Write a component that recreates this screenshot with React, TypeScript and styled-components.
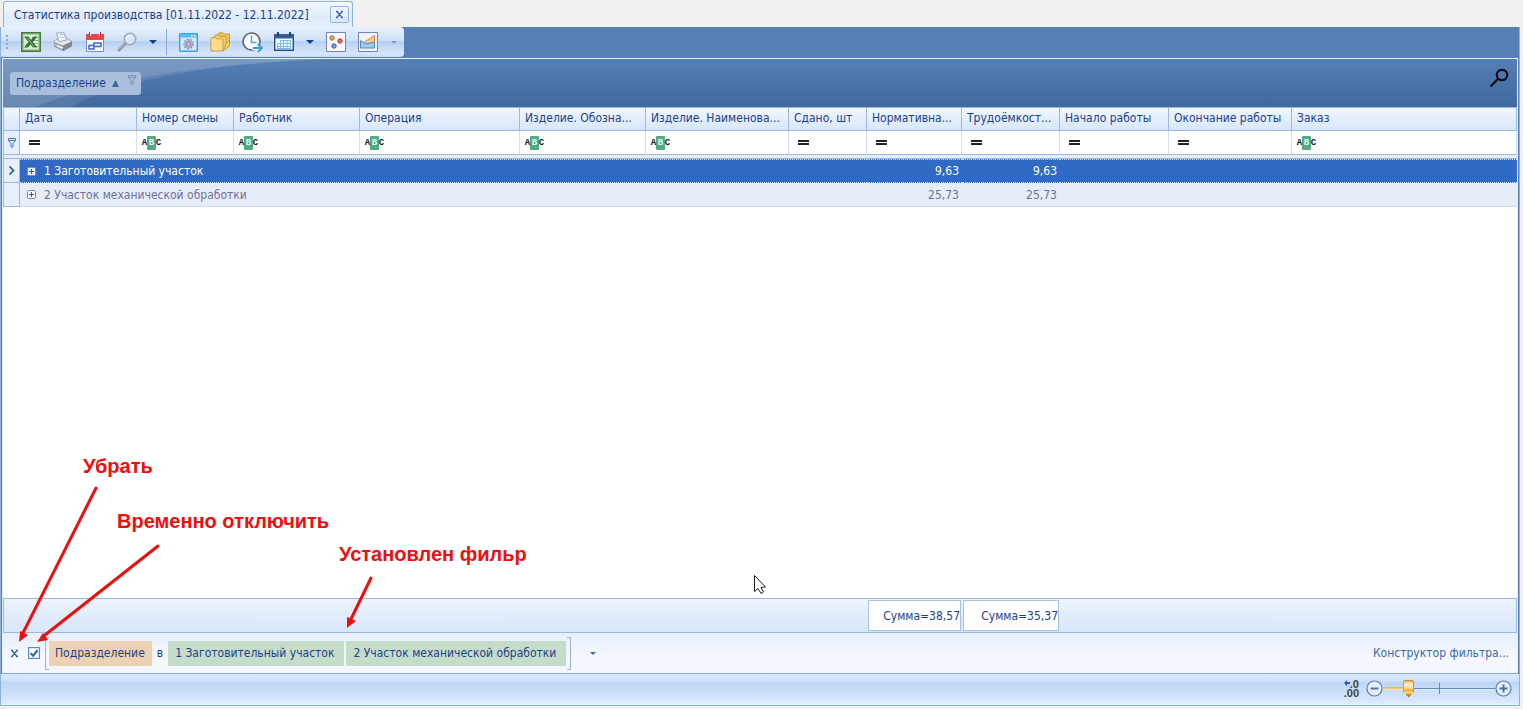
import React from "react";
import styled, { createGlobalStyle, css } from "styled-components";

const ink = "#1e3f87";
const line = "#9db8db";
const columnsTemplate =
  "16px 117px 97px 126px 160px 126px 143px 78px 95px 98px 109px 123px minmax(0, 1fr)";

const Global = createGlobalStyle`
  * { box-sizing: border-box; }
  body {
    margin: 0;
    background: #f0f0f0;
    color: ${ink};
    font: 12px/16px "DejaVu Sans Condensed", "DejaVu Sans", sans-serif;
  }
  button, input { font: inherit; color: inherit; margin: 0; padding: 0; }
  button { border: 0; background: none; cursor: default; }
`;

const Page = styled.div`
  position: relative;
  display: flex;
  flex-direction: column;
  min-height: 100vh;
  padding: 1px 3px 3px 0;
`;

const TabStrip = styled.header`
  display: flex;
  height: 26px;
  padding-left: 3px;
`;

const Tab = styled.div`
  display: flex;
  align-items: center;
  gap: 21px;
  padding: 0 3px 0 10px;
  border: 1px solid #8fb2e0;
  border-bottom: 0;
  border-radius: 3px 3px 0 0;
  background: linear-gradient(#f4f8fe, #dfebfb 60%, #e6f0fd);
  white-space: nowrap;
`;

const TabClose = styled.button`
  display: flex;
  align-items: center;
  justify-content: center;
  width: 19px;
  height: 17px;
  border: 1px solid #94b3dc;
  border-radius: 2px;
  background: linear-gradient(#f2f7fe, #d9e7fa);
`;

const Frame = styled.main`
  flex: 1;
  display: flex;
  flex-direction: column;
  border: 1px solid #8db1de;
  border-top: 0;
  background: #557fb5;
`;

const ToolbarRow = styled.div`
  display: flex;
  height: 31px;
  padding-bottom: 1px;
`;

const Toolbar = styled.div`
  display: flex;
  align-items: center;
  padding-left: 14px;
  border-radius: 0 4px 4px 0;
  background:
    linear-gradient(#8aa9d4, #8aa9d4) 5px 8px / 2px 2px no-repeat,
    linear-gradient(#8aa9d4, #8aa9d4) 5px 12px / 2px 2px no-repeat,
    linear-gradient(#8aa9d4, #8aa9d4) 5px 16px / 2px 2px no-repeat,
    linear-gradient(#8aa9d4, #8aa9d4) 5px 20px / 2px 2px no-repeat,
    linear-gradient(#e9f1fc 0, #cfdff5 45%, #b4cff2 46%, #d9e7fa 90%, #c5daf6);
`;

const ToolButton = styled.button<{ $width?: number }>`
  display: flex;
  align-items: center;
  justify-content: center;
  width: ${(p) => p.$width ?? 32}px;
  height: 28px;
`;

const ToolSeparator = styled.span`
  width: 1px;
  height: 26px;
  margin: 0 5px 0 3px;
  background: #87a9d6;
`;

const Arrow = styled.span<{ $size: number; $color: string }>`
  border: ${(p) => p.$size}px solid transparent;
  border-top-color: ${(p) => p.$color};
  border-bottom: 0;
`;

const Grid = styled.section`
  flex: 1;
  display: flex;
  flex-direction: column;
  border: 1px solid #e8f1fc;
  border-bottom-color: #86a5cd;
  margin: 0 1px;
  background: #fff;
`;

const GroupPanel = styled.div`
  position: relative;
  display: flex;
  align-items: center;
  justify-content: space-between;
  height: 48px;
  padding: 0 8px 0 7px;
  background: linear-gradient(#557fb5, #41689c);
`;

const Swoosh = styled.svg`
  position: absolute;
  left: 0;
  top: 0;
`;

const GroupChip = styled.button`
  position: relative;
  display: flex;
  align-items: center;
  gap: 6px;
  width: 131px;
  height: 23px;
  padding: 0 3px 0 6px;
  border-radius: 3px;
  background: #a9bfdb;
`;

const PanelSearch = styled.button`
  display: flex;
  height: 30px;
`;

const ChipFunnel = styled.span`
  display: flex;
  align-self: flex-start;
  margin: 3px 0 0 3px;
`;

const Table = styled.table`
  width: 100%;
  table-layout: fixed;
  border-spacing: 0;
  border-left: 1px solid ${line};
`;

const HeadCell = styled.th`
  height: 24px;
  padding: 0 4px 2px 5px;
  border: solid ${line};
  border-width: 1px 1px 1px 0;
  background: linear-gradient(#f0f6fe, #d8e7fa);
  text-align: left;
  font-weight: normal;
  white-space: nowrap;
  overflow: hidden;
`;

const FilterCell = styled.td`
  height: 24px;
  padding: 0 0 0 5px;
  border-right: 1px solid #d3e1f3;
  border-bottom: 1px solid ${line};
`;

const SideCell = styled.td`
  padding: 0;
  border-right: 1px solid ${line};
  border-bottom: 1px solid ${line};
  background: #e6f0fc;
  text-align: center;
  line-height: 0;
`;

const DividerCell = styled.td`
  height: 4px;
  padding: 0;
  border-bottom: 1px solid ${line};
  background: #e3eefb;
`;

const focusedCell = css`
  background: #316ac5;
  color: #fff;
  border-top: 1px dotted #dce8fa;
  border-bottom: 1px dotted #dce8fa;
`;

const plainCell = css`
  background: #e6edf8;
  color: #6f719b;
  border-bottom: 1px solid #cfdcee;
`;

const DataCell = styled.td<{ $focused: boolean; $numeric?: boolean }>`
  height: 24px;
  padding: 0 3px 0 7px;
  white-space: nowrap;
  text-align: ${(p) => (p.$numeric ? "right" : "left")};
  ${(p) => (p.$focused ? focusedCell : plainCell)}
`;

const GroupTitle = styled.div`
  display: flex;
  align-items: center;
  gap: 8px;
`;

const Expander = styled.button`
  display: flex;
`;

const OperatorButton = styled.button`
  display: flex;
  align-items: center;
  height: 16px;
`;

const Letter = styled.span<{ $boxed?: boolean }>`
  display: inline-flex;
  align-items: center;
  justify-content: center;
  width: ${(p) => (p.$boxed ? 9 : 5)}px;
  height: 14px;
  border-radius: 1px;
  background: ${(p) => (p.$boxed ? "#51aa85" : "none")};
  color: ${(p) => (p.$boxed ? "#e5fff2" : "#111")};
  font: bold 9px/14px "Liberation Mono", monospace;
`;

const EqualsMark = styled.span`
  width: 11px;
  height: 5px;
  margin-left: 4px;
  border: solid #222;
  border-width: 2px 0;
`;

const EmptyArea = styled.div`
  flex: 1;
  min-height: 80px;
`;

const Totals = styled.div`
  display: grid;
  grid-template-columns: ${columnsTemplate};
  height: 35px;
  padding: 1px 0;
  border: 1px solid ${line};
  background: linear-gradient(#edf4fd, #d7e6fa);
`;

const Total = styled.div<{ $column: number }>`
  grid-column: ${(p) => p.$column};
  grid-row: 1;
  display: flex;
  align-items: center;
  justify-content: flex-end;
  margin: 0 1px;
  border: 1px solid #a9c2e0;
  background: #fff;
  white-space: nowrap;
`;

const FilterBar = styled.div`
  display: flex;
  align-items: center;
  height: 40px;
  padding: 0 8px 0 7px;
  background: linear-gradient(#e6effc, #f4f8fe 60%);
  white-space: nowrap;
`;

const ClearFilter = styled.button`
  display: flex;
  padding: 0;
`;

const Check = styled.input`
  appearance: none;
  width: 12px;
  height: 12px;
  margin: 0 5px 0 9px;
  border: 1px solid #5c8bc4;
  background: #fff;
  box-shadow: inset 0 0 0 1px #d5e4f6;
  &:checked::before {
    content: "";
    display: block;
    width: 10px;
    height: 10px;
    background: #2d5ea8;
    clip-path: polygon(15% 40%, 40% 62%, 82% 10%, 90% 34%, 42% 92%, 15% 64%);
  }
`;

const Bracket = styled.span<{ $right?: boolean }>`
  width: 4px;
  height: 33px;
  border: 1px solid #9db5d3;
  ${(p) => (p.$right ? "border-left: 0; margin-left: 1px;" : "border-right: 0;")}
`;

const Token = styled.button<{ $kind: "field" | "value" }>`
  height: 25px;
  padding: ${(p) => (p.$kind === "field" ? "0 7px 0 6px" : "0 10px 0 7px")};
  border-radius: 1px;
  background: ${(p) => (p.$kind === "field" ? "#ecd1b3" : "#c5dccb")};
`;

const Tokens = styled.div`
  display: flex;
  align-items: center;
  gap: 2px;
`;

const Operator = styled.span`
  padding: 0 3px;
`;

const RecentFilters = styled.button`
  display: flex;
  padding: 6px;
  margin-left: 13px;
`;

const Designer = styled.a`
  margin-left: auto;
  color: #3f68a8;
  text-decoration: none;
`;

const StatusBar = styled.footer`
  display: flex;
  align-items: center;
  justify-content: flex-end;
  height: 31px;
  padding: 0 7px 2px 0;
  background: linear-gradient(#dbe9fb 0, #cfe1f8 24%, #bad5f6 25%, #dcebfc 94%, #e8f2fd);
`;

const Decimals = styled.span`
  display: grid;
  justify-items: end;
  margin-right: 7px;
  color: #3d4248;
  font: bold 11px/9px "Liberation Sans", sans-serif;
`;

const DecimalTop = styled.span`
  display: flex;
  align-items: flex-start;
`;

const RoundButton = styled.button`
  display: flex;
`;

const Range = styled.input`
  appearance: none;
  width: 112px;
  height: 20px;
  background:
    linear-gradient(#5e87bf, #5e87bf) 56px 50% / 1px 11px no-repeat,
    linear-gradient(#dfb15d, #fbe5b4) 0 50% / 24px 3px no-repeat,
    linear-gradient(#5e87bf 50%, #e7f1fd 50%) 0 50% / 100% 2px no-repeat;
  &::-webkit-slider-thumb {
    appearance: none;
    width: 11px;
    height: 18px;
    border: 1px solid #c98c2f;
    border-radius: 2px;
    background: linear-gradient(#e9b565, #fff0c8 20%, #fbd68c 50%, #f3a92a 54%, #ffd977 74%, #b87b1e 88%);
    clip-path: polygon(0 0, 100% 0, 100% 66%, 50% 100%, 0 66%);
  }
`;

const Note = styled.span<{ $x: number; $y: number }>`
  position: absolute;
  left: ${(p) => p.$x}px;
  bottom: ${(p) => p.$y}px;
  color: #f00e0e;
  font: bold 20px/24px "Liberation Sans", Arial, sans-serif;
  white-space: nowrap;
`;

const Pointers = styled.svg`
  position: absolute;
  left: 0;
  bottom: 0;
  pointer-events: none;
`;

const Cross = () => (
  <svg width="9" height="9" viewBox="0 0 9 9" fill="none" stroke="#3566a6" strokeWidth="1.3">
    <path d="M2 1.500 7 7.500M7 1.500 2 7.500M1 1.500h2M6 1.500h2M1 7.500h2M6 7.500h2" />
  </svg>
);

const Funnel = ({ color = "#4778b5" }: { color?: string }) => (
  <svg width="8" height="10" viewBox="0 0 8 10" fill="none" stroke={color}>
    <path d="M.5.5h7v2L5 5.5v3L3.5 9.5 3 9V5.5l-2.500-3ZM.5 2.500h7" />
  </svg>
);

const ExcelIcon = () => (
  <svg width="20" height="20" viewBox="0 0 20 20">
    <path fill="#417a3c" d="M0 0h20v20H0z" />
    <path fill="#a9cc9d" d="M1.500 1.500h17v17h-17z" />
    <path fill="#dcebd5" d="M3 3h14v14H3z" />
    <path fill="#fff" d="M12 4h4.500v12H12z" />
    <path stroke="#7fae79" d="M11 5.500h6M11 8.500h6M11 11.500h6M11 14.500h6" />
    <path fill="#2f7436" d="M3 4.500h4.500L10 8l2.500-3.500h4L12 10l4.500 5.500h-4.500L9.500 12.500 7 15.500H3L7.500 10Z" />
    <path stroke="#8cc48b" d="m6 5.500 7 9" />
  </svg>
);

const PrinterIcon = () => (
  <svg width="20" height="20" viewBox="0 0 20 20">
    <path fill="#6b7077" d="m1 10 9 3.500 9-4v4.500L10.500 19 1 14.500Z" />
    <path fill="#e3e6e8" stroke="#868c93" strokeWidth=".7" d="m1 9 4-2.500L12.500 8l2-1.500L19 9.500 10 14 1 10.500Z" />
    <path fill="#b3b8bd" d="m1 11 9 3.500v3.500l-9-4Z" />
    <path fill="#858b92" d="m10.500 14.500 8.500-4v3.500l-8.500 4Z" />
    <path fill="#f7fbff" stroke="#8195ac" strokeWidth=".8" d="M3.500 1 11 .8l2.500 7-7.500 2Z" />
    <path stroke="#a9c4e2" d="m5.500 3 5-.5M6.500 5.500l5-.5" />
    <path fill="#fff" stroke="#aaa" strokeWidth=".6" d="m2.500 13.500 2-.7 6 2.700-2 1.500Z" />
    <circle cx="16" cy="12.500" r=".9" fill="#49a848" />
  </svg>
);

const CalendarIcon = () => (
  <svg width="20" height="20" viewBox="0 0 20 20">
    <path fill="#f9fbff" stroke="#6f92d2" d="M1.500 2.500h17v17h-17z" />
    <path fill="#e5484c" d="M1 2h18v6H1z" />
    <path fill="#fff" d="M4 0h2v4H4zM14 0h2v4h-2z" />
    <path stroke="#b5272b" d="M4.500 0v4M15.500 0v4" />
    <path fill="none" stroke="#3e62cf" strokeWidth="1.500" d="M4 13.500h5V17H4ZM9 14v-3h7v3.500H9" />
  </svg>
);

const LensIcon = () => (
  <svg width="20" height="20" viewBox="0 0 20 20" fill="none">
    <path stroke="#89919f" strokeWidth="3" strokeLinecap="round" d="m2 18 6-6" />
    <path stroke="#c6ccd6" strokeLinecap="round" d="m2 17.500 5.500-5.500" />
    <circle cx="13" cy="7" r="5.700" fill="#d8e8fa" stroke="#9ba5b5" strokeWidth="1.500" />
    <path stroke="#fff" strokeWidth="1.500" d="M9.500 7A3.500 3.500 0 0 1 13 3.500" />
  </svg>
);

const WindowGearIcon = () => (
  <svg width="19" height="19" viewBox="0 0 19 19">
    <rect x=".7" y=".7" width="17.600" height="17.600" rx="1" fill="#d5eafa" stroke="#37a2e8" strokeWidth="1.500" />
    <path fill="#55b9f4" d="M1 1h17v3.500H1z" />
    <path fill="#fff" d="M12 2h1.500v1.500H12zM15 2h1.500v1.500H15z" />
    <circle cx="9.500" cy="11" r="4.600" fill="none" stroke="#8a86b8" strokeWidth="1.500" strokeDasharray="2 1.200" />
    <circle cx="9.500" cy="11" r="4" fill="#a9a5cb" />
    <circle cx="9.500" cy="11" r="1.600" fill="#dddaf0" stroke="#817da8" strokeWidth=".7" />
  </svg>
);

const FoldersIcon = () => (
  <svg width="20" height="20" viewBox="0 0 20 20" stroke="#c79025" strokeWidth=".8">
    <path fill="#edc35b" d="M7 3 9 .8h4L14 2h5.500v11L17 15H7Z" />
    <path fill="#f3cf72" d="m4 5 1.500-2H9l1 1.500h6V15l-2 2H4Z" />
    <path fill="#f9dc8c" d="M.8 7.500 2 5.500h4L7 7h6v12H1Z" />
    <path fill="#f6cf66" d="m13 19 3-7 3.500-4v5L17 16Z" />
  </svg>
);

const ClockIcon = () => (
  <svg width="21" height="21" viewBox="0 0 21 21" fill="none">
    <circle cx="9.500" cy="9.500" r="8.500" fill="#fbfdff" stroke="#59616d" strokeWidth="1.600" />
    <path stroke="#4ba3da" strokeWidth="1.500" d="M9.500 3.500v7h5" />
    <path stroke="#e8f2fd" strokeWidth="4" d="M10 16h10" />
    <path stroke="#389bd8" strokeWidth="1.800" d="M11 16h8.500m-3.500-4 4 4-4 4" />
  </svg>
);

const ScheduleIcon = () => (
  <svg width="20" height="20" viewBox="0 0 20 20">
    <path fill="#f8fcff" stroke="#234d7d" strokeWidth="1.400" d="M.7 2.700h18.600v15.600H.7z" />
    <path fill="#315e93" d="M0 2h20v4.500H0z" />
    <path fill="#1f4674" d="M3 0h2v4H3zM15 0h2v4h-2z" />
    <path fill="none" stroke="#74bce8" d="M6.500 8.500h10v8M3.500 11.500h13M3.500 14.500h13M3.500 11.500v5h13M6.500 8.500v8M9.500 8.500v8M13 8.500v8" />
  </svg>
);

const ScatterIcon = () => (
  <svg width="20" height="20" viewBox="0 0 20 20">
    <path fill="#f7f8fe" stroke="#7584b5" d="M.5.5h19v19H.5z" />
    <circle cx="6" cy="6" r="2.200" fill="#e7a66e" stroke="#bc6636" />
    <circle cx="14" cy="9" r="2.200" fill="#d77565" stroke="#a73932" />
    <circle cx="8" cy="14" r="2.200" fill="#7f9fe0" stroke="#3b5fae" />
  </svg>
);

const AreaIcon = () => (
  <svg width="20" height="20" viewBox="0 0 20 20">
    <path fill="#eff3fb" stroke="#7584b5" d="M.5.5h19v19H.5z" />
    <path fill="#f6c99a" stroke="#dc8c3c" d="m4 11.500 12.500-8v10Z" />
    <path fill="#9ccbed" stroke="#4e8dbf" d="M2.500 8.500 8 12l8.500-2v6h-14Z" />
  </svg>
);

const ExpandIcon = ({ focused }: { focused: boolean }) => (
  <svg width="9" height="9" viewBox="0 0 9 9">
    <rect x=".5" y=".5" width="8" height="8" rx="1" fill={focused ? "#e8eef8" : "#f4f6fb"} stroke="#8088a0" />
    <path stroke="#4b5278" d="M2 4.500h5M4.500 2v5" />
  </svg>
);

const ZoomGlyph = ({ plus = false }: { plus?: boolean }) => (
  <svg width="17" height="17" viewBox="0 0 17 17">
    <circle cx="8.500" cy="8.500" r="7.500" fill="#e3effd" stroke="#607d9f" strokeWidth="1.200" />
    <path stroke="#4e749f" strokeWidth="2" d={plus ? "M4.500 8.500h8M8.500 4.500v8" : "M4.500 8.500h8"} />
  </svg>
);

const ContainsMark = () => (
  <>
    <Letter>A</Letter>
    <Letter $boxed>B</Letter>
    <Letter>C</Letter>
  </>
);

type Column = { title: string; width?: number; text: boolean };

const columns: Column[] = [
  { title: "Дата", width: 117, text: false },
  { title: "Номер смены", width: 97, text: true },
  { title: "Работник", width: 126, text: true },
  { title: "Операция", width: 160, text: true },
  { title: "Изделие. Обозна...", width: 126, text: true },
  { title: "Изделие. Наименова...", width: 143, text: true },
  { title: "Сдано, шт", width: 78, text: false },
  { title: "Нормативна...", width: 95, text: false },
  { title: "Трудоёмкост...", width: 98, text: false },
  { title: "Начало работы", width: 109, text: false },
  { title: "Окончание работы", width: 123, text: false },
  { title: "Заказ", text: true },
];

const groups = [
  { title: "1 Заготовительный участок", norm: "9,63", labour: "9,63" },
  { title: "2 Участок механической обработки", norm: "25,73", labour: "25,73" },
];

const firstTools = [
  { label: "Экспорт в Excel", Icon: ExcelIcon },
  { label: "Печать", Icon: PrinterIcon },
  { label: "Период", Icon: CalendarIcon },
  { label: "Поиск", Icon: LensIcon },
];
const secondTools = [
  { label: "Настройки", Icon: WindowGearIcon },
  { label: "Группы", Icon: FoldersIcon },
  { label: "Время", Icon: ClockIcon },
  { label: "Календарь", Icon: ScheduleIcon },
];
const chartTools = [
  { label: "Точечная диаграмма", Icon: ScatterIcon },
  { label: "Диаграмма", Icon: AreaIcon },
];

const Tools = ({ items }: { items: typeof firstTools }) => (
  <>
    {items.map(({ label, Icon }) => (
      <ToolButton key={label} aria-label={label}>
        <Icon />
      </ToolButton>
    ))}
  </>
);

const DataTable = () => (
  <Table>
    <colgroup>
      <col width={16} />
      {columns.map((c) => (
        <col key={c.title} width={c.width} />
      ))}
    </colgroup>
    <thead>
      <tr>
        <HeadCell />
        {columns.map((c) => (
          <HeadCell key={c.title} scope="col">{c.title}</HeadCell>
        ))}
      </tr>
    </thead>
    <tbody>
      <tr>
        <SideCell><Funnel /></SideCell>
        {columns.map((c) => (
          <FilterCell key={c.title}>
            <OperatorButton aria-label={`Условие: ${c.title}`}>
              {c.text ? <ContainsMark /> : <EqualsMark />}
            </OperatorButton>
          </FilterCell>
        ))}
      </tr>
      <tr>
        <DividerCell colSpan={13} />
      </tr>
      {groups.map((g, i) => (
        <tr key={g.title}>
          <SideCell>
            {i === 0 && (
              <svg width="7" height="9" viewBox="0 0 7 9" fill="none" stroke="#2d5b9c" strokeWidth="1.700">
                <path d="m1.500 .5 4 4-4 4" />
              </svg>
            )}
          </SideCell>
          <DataCell $focused={i === 0} colSpan={7}>
            <GroupTitle>
              <Expander aria-label="Развернуть"><ExpandIcon focused={i === 0} /></Expander>
              {g.title}
            </GroupTitle>
          </DataCell>
          <DataCell $focused={i === 0} $numeric>{g.norm}</DataCell>
          <DataCell $focused={i === 0} $numeric>{g.labour}</DataCell>
          <DataCell $focused={i === 0} colSpan={3} />
        </tr>
      ))}
    </tbody>
  </Table>
);

export default function App() {
  return (
    <>
      <Global />
      <Page>
        <TabStrip>
          <Tab>
            Статистика производства [01.11.2022 - 12.11.2022]
            <TabClose aria-label="Закрыть"><Cross /></TabClose>
          </Tab>
        </TabStrip>
        <Frame>
          <ToolbarRow>
            <Toolbar role="toolbar">
              <Tools items={firstTools} />
              <ToolButton $width={20} aria-label="Варианты поиска"><Arrow $size={4} $color="#173f88" /></ToolButton>
              <ToolSeparator />
              <Tools items={secondTools} />
              <ToolButton $width={20} aria-label="Варианты календаря"><Arrow $size={4} $color="#173f88" /></ToolButton>
              <Tools items={chartTools} />
              <ToolButton $width={20} aria-label="Ещё"><Arrow $size={3} $color="#7897c6" /></ToolButton>
            </Toolbar>
          </ToolbarRow>
          <Grid>
            <GroupPanel>
              <Swoosh width="330" height="48" viewBox="0 0 330 48">
                <path fill="#fff" fillOpacity=".1" d="M0 0h330C210 4 115 21 68 48H0Z" />
                <path fill="#fff" fillOpacity=".12" d="M0 0h320C190 6 95 22 33 48H0Z" />
              </Swoosh>
              <GroupChip>
                Подразделение
                <svg width="7" height="7" viewBox="0 0 7 7"><path fill="#3e659f" d="M3.500 0 7 7H0Z" /></svg>
                <ChipFunnel><Funnel color="#7894bb" /></ChipFunnel>
              </GroupChip>
              <PanelSearch aria-label="Найти">
                <svg width="20" height="20" viewBox="0 0 20 20" fill="none" stroke="#0a0d14" strokeWidth="2.200">
                  <circle cx="13" cy="7" r="5.200" />
                  <path d="m9 11-7.500 7.500" />
                </svg>
              </PanelSearch>
            </GroupPanel>
            <DataTable />
            <EmptyArea />
            <Totals>
              <Total $column={9}>Сумма=38,57</Total>
              <Total $column={10}>Сумма=35,37</Total>
            </Totals>
            <FilterBar>
              <ClearFilter aria-label="Убрать фильтр"><Cross /></ClearFilter>
              <Check type="checkbox" defaultChecked aria-label="Фильтр включён" />
              <Bracket />
              <Tokens>
                <Token $kind="field">Подразделение</Token>
                <Operator>в</Operator>
                <Token $kind="value">1 Заготовительный участок</Token>
                <Token $kind="value">2 Участок механической обработки</Token>
              </Tokens>
              <Bracket $right />
              <RecentFilters aria-label="Недавние фильтры"><Arrow $size={3} $color="#3f6ca8" /></RecentFilters>
              <Designer href="#filter">Конструктор фильтра...</Designer>
            </FilterBar>
          </Grid>
          <StatusBar>
            <Decimals>
              <DecimalTop>
                <svg width="6" height="6" viewBox="0 0 6 6"><path fill="#3454cf" d="M0 3 3 0v2h3v2H3v2Z" /></svg>
                .0
              </DecimalTop>
              <span>.00</span>
            </Decimals>
            <RoundButton aria-label="Уменьшить"><ZoomGlyph /></RoundButton>
            <Range type="range" min={0} max={100} defaultValue={20} aria-label="Масштаб" />
            <RoundButton aria-label="Увеличить"><ZoomGlyph plus /></RoundButton>
          </StatusBar>
        </Frame>
        <Note $x={83} $y={231}>Убрать</Note>
        <Note $x={117} $y={176}>Временно отключить</Note>
        <Note $x={339} $y={143}>Установлен фильр</Note>
        <Pointers width="800" height="229" viewBox="0 480 800 229">
          <g stroke="#ea1010" strokeWidth="3" strokeLinecap="round">
            <path d="M96 488 23 633M158 546 45 635M371 578 351 619" />
          </g>
          <g fill="#f00e0e">
            <path d="m19 642 1-11 8 4ZM37 642l6-9 5 7ZM347 628l0-11 9 4Z" />
          </g>
          <path fill="#fff" stroke="#222" d="M754.500 575.500v16l3.500-3 3 5 2.500-1.500-2.500-4.500 4.500-.5Z" />
        </Pointers>
      </Page>
    </>
  );
}
